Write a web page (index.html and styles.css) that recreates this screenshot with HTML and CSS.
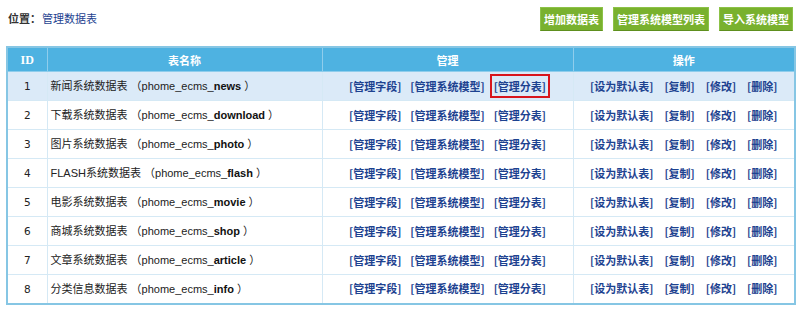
FILE: index.html
```html
<!DOCTYPE html>
<html lang="zh-CN">
<head>
<meta charset="utf-8">
<title>管理数据表</title>
<link rel="stylesheet" href="styles.css">
</head>
<body>
<div class="page">
  <div class="topbar">
    <div class="crumb"><span class="crumb-label">位置：</span><a class="crumb-link" href="#">管理数据表</a></div>
    <div class="actions">
      <a class="btn" href="#">增加数据表</a>
      <a class="btn" href="#">管理系统模型列表</a>
      <a class="btn" href="#">导入系统模型</a>
    </div>
  </div>
  <table class="grid">
    <colgroup>
      <col class="c-id"><col class="c-name"><col class="c-mgr"><col class="c-ops">
    </colgroup>
    <thead>
      <tr><th class="th-id">ID</th><th>表名称</th><th>管理</th><th>操作</th></tr>
    </thead>
    <tbody>
      <tr class="hl">
        <td class="id">1</td>
        <td class="name">新闻系统数据表 （phome_ecms_<b>news</b> ）</td>
        <td class="links mgr"><a href="#">[管理字段]</a><a href="#">[管理系统模型]</a><a class="mark" href="#">[管理分表]</a></td>
        <td class="links ops"><a href="#">[设为默认表]</a><a href="#">[复制]</a><a href="#">[修改]</a><a href="#">[删除]</a></td>
      </tr>
      <tr>
        <td class="id">2</td>
        <td class="name">下载系统数据表 （phome_ecms_<b>download</b> ）</td>
        <td class="links mgr"><a href="#">[管理字段]</a><a href="#">[管理系统模型]</a><a href="#">[管理分表]</a></td>
        <td class="links ops"><a href="#">[设为默认表]</a><a href="#">[复制]</a><a href="#">[修改]</a><a href="#">[删除]</a></td>
      </tr>
      <tr>
        <td class="id">3</td>
        <td class="name">图片系统数据表 （phome_ecms_<b>photo</b> ）</td>
        <td class="links mgr"><a href="#">[管理字段]</a><a href="#">[管理系统模型]</a><a href="#">[管理分表]</a></td>
        <td class="links ops"><a href="#">[设为默认表]</a><a href="#">[复制]</a><a href="#">[修改]</a><a href="#">[删除]</a></td>
      </tr>
      <tr>
        <td class="id">4</td>
        <td class="name">FLASH系统数据表 （phome_ecms_<b>flash</b> ）</td>
        <td class="links mgr"><a href="#">[管理字段]</a><a href="#">[管理系统模型]</a><a href="#">[管理分表]</a></td>
        <td class="links ops"><a href="#">[设为默认表]</a><a href="#">[复制]</a><a href="#">[修改]</a><a href="#">[删除]</a></td>
      </tr>
      <tr>
        <td class="id">5</td>
        <td class="name">电影系统数据表 （phome_ecms_<b>movie</b> ）</td>
        <td class="links mgr"><a href="#">[管理字段]</a><a href="#">[管理系统模型]</a><a href="#">[管理分表]</a></td>
        <td class="links ops"><a href="#">[设为默认表]</a><a href="#">[复制]</a><a href="#">[修改]</a><a href="#">[删除]</a></td>
      </tr>
      <tr>
        <td class="id">6</td>
        <td class="name">商城系统数据表 （phome_ecms_<b>shop</b> ）</td>
        <td class="links mgr"><a href="#">[管理字段]</a><a href="#">[管理系统模型]</a><a href="#">[管理分表]</a></td>
        <td class="links ops"><a href="#">[设为默认表]</a><a href="#">[复制]</a><a href="#">[修改]</a><a href="#">[删除]</a></td>
      </tr>
      <tr>
        <td class="id">7</td>
        <td class="name">文章系统数据表 （phome_ecms_<b>article</b> ）</td>
        <td class="links mgr"><a href="#">[管理字段]</a><a href="#">[管理系统模型]</a><a href="#">[管理分表]</a></td>
        <td class="links ops"><a href="#">[设为默认表]</a><a href="#">[复制]</a><a href="#">[修改]</a><a href="#">[删除]</a></td>
      </tr>
      <tr>
        <td class="id">8</td>
        <td class="name">分类信息数据表 （phome_ecms_<b>info</b> ）</td>
        <td class="links mgr"><a href="#">[管理字段]</a><a href="#">[管理系统模型]</a><a href="#">[管理分表]</a></td>
        <td class="links ops"><a href="#">[设为默认表]</a><a href="#">[复制]</a><a href="#">[修改]</a><a href="#">[删除]</a></td>
      </tr>
    </tbody>
  </table>
</div>
</body>
</html>
```
FILE: styles.css
```css
html, body {
  margin: 0;
  padding: 0;
  background: #ffffff;
}
body {
  font-family: "Liberation Sans", "Noto Sans CJK SC", sans-serif;
  font-size: 11px;
  color: #222222;
}
.page {
  padding: 0 6px;
}
.topbar {
  display: flex;
  justify-content: space-between;
  align-items: flex-start;
  height: 46px;
}
.crumb {
  padding: 11px 0 0 2px;
  font-family: "Noto Sans CJK SC", sans-serif;
  font-size: 11px;
  line-height: 14px;
}
.crumb-label {
  color: #333333;
  font-weight: bold;
}
.crumb-link {
  color: #1d4290;
  text-decoration: none;
  margin-left: 1px;
}
.actions {
  display: flex;
  padding-top: 7px;
  padding-right: 1px;
}
.btn {
  display: block;
  height: 22px;
  line-height: 22px;
  padding: 0 3px;
  background: #79b12e;
  border: 1px solid #8cc247;
  border-bottom-color: #5e8f1e;
  color: #ffffff;
  font-family: "Noto Sans CJK SC", sans-serif;
  font-weight: bold;
  font-size: 11px;
  text-decoration: none;
  margin-left: 10px;
}
.grid {
  width: 788px;
  border-collapse: collapse;
  border: 2px solid #86c6e4;
  table-layout: fixed;
}
.c-id { width: 40px; }
.c-name { width: 275px; }
.c-mgr { width: 251px; }
.c-ops { width: 222px; }
.grid th {
  background: #4eb2e1;
  color: #ffffff;
  font-family: "Noto Sans CJK SC", sans-serif;
  font-weight: bold;
  font-size: 11px;
  line-height: 14px;
  height: 23px;
  padding: 0;
  border: 1px solid #8fcdec;
  text-align: center;
}
.grid th.th-id {
  font-family: "Liberation Serif", serif;
  font-size: 12px;
}
.grid td {
  height: 29px;
  box-sizing: border-box;
  padding: 0;
  line-height: 14px;
  border: 1px solid #d5e9f5;
  vertical-align: middle;
}
.grid tr.hl td {
  background: #dbeaf8;
}
.grid td.id {
  text-align: center;
  font-family: "DejaVu Sans", sans-serif;
  font-size: 10.5px;
}
.grid td.name {
  padding-left: 3px;
  white-space: nowrap;
  color: #222222;
}
.grid td.name b {
  color: #111111;
}
.grid td.links {
  text-align: center;
  white-space: nowrap;
}
.grid td.links a {
  color: #1d4290;
  text-decoration: none;
  font-family: "Noto Sans CJK SC", sans-serif;
  font-weight: bold;
}
.grid td.mgr a {
  margin: 0 4.5px;
}
.grid td.ops a {
  margin: 0 5.5px;
}
.grid td.links a.mark {
  outline: 2px solid #d8151c;
  outline-offset: 2px;
}
```
